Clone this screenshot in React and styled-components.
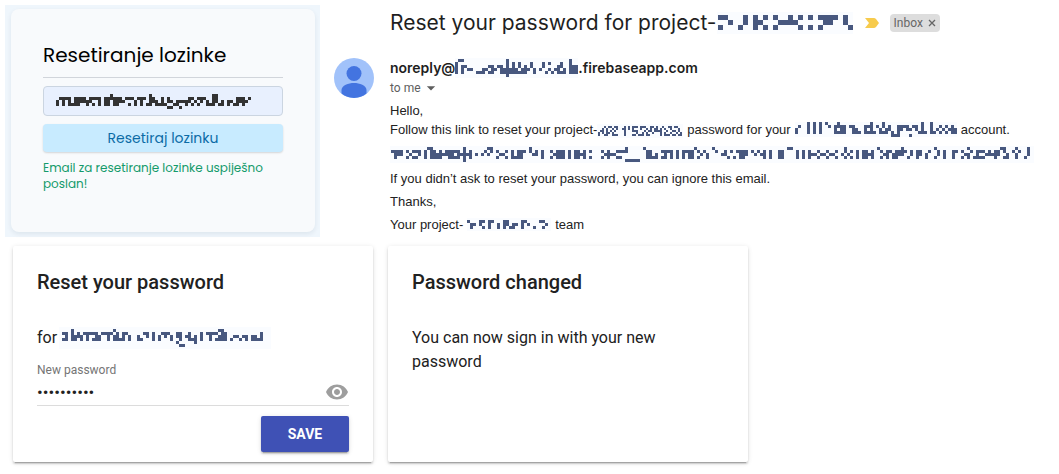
import React from "react";
import styled, { createGlobalStyle } from "styled-components";
import { MdVisibility, MdArrowDropDown } from "react-icons/md";

const GlobalStyle = createGlobalStyle`
  *, *::before, *::after { box-sizing: border-box; }
  body { margin: 0; background: #fff; }
  h1, h2, p { margin: 0; }
  button, input { font: inherit; }
`;

/* Censored values: each string is a row of blocks. */
const MASKS = {
  field: [
    "..................#............#....................##...........",
    ".####.####.####.######.###.###.##..#.#......##.###..##......###.#",
    "#.#.#.######..#.##.####...#.#..###.#.##.#####.#.#.#.##.#.##.####.",
    "#.#.####..#.#.#.##.##...#.#.#.##.####..##..#.#.#..###.##.#.##.#..",
    ".....................................##..#.......................",
  ],
  subject: [
    "##...#.#.#.#..#.#.#.####.#.",
    "..#..#.##...####.....##..#.",
    "#...#..#.#.#....#.#.#.....#",
  ],
  sender: [
    ".##..............#....................#..",
    "#................#.#.#...#...#.#...#..#..",
    "#.##.......##.##.#.#.#.#.#...#....##..###",
    "#.#.##...##.##.######.###.#.#..#.##.#.###",
    "#.#....###.##..#########..#...#.#.###.###",
    ".................#.......................",
  ],
  project: [
    "...#.##.##...#.#.###.###..##.#..#..##.##..",
    "..#.#..#.#..##.#.#...#..#.#.##.#.#..#...#.",
    ".##.#.#.#....#...###...#.##.####..#..##.#.",
    "#.#.##.#.....#.....#..#.#..#...#.#..#..#.#",
    "#..##..###...#...##.###.##.....#.###.##.##",
  ],
  account: [
    "....#.#.#.#...#..........#...#............#..#........",
    ".#..#.#.#..#.####.##...###.#.#.#..####.##.#..#..#.#.#.",
    "#...#.#.#....#.##..##..#.#..#.##..##.##.#.#..#.#.#.###",
    "#...#.#.#....####..###.####.###.#.#......###.##.#.#.##",
    "................................###...#...............",
  ],
  link: [
    "............##..........#.......##............#...............................#.....#................#.....#........................##.................#..........#.......#..........#..........#..........##...#...#.",
    "####.#.###.#.##.#.#####.#.#....#.#.#..#.#.###.#.#.#..#.###.#.##.#.#...#.#..####......##...####.#.####.#.#...#..#.#.####.#.#.#.#..##....#.#.#..#..#..#..#.#.#.##.#..#.##.####.#.##..#..#.#..##.#..#.###.#.##.#..#.#..#",
    ".###..#..#.#.########.#####.#.#.#...##..#.##...##.#...####.#.####......####..........##.#..#.#.#.#.##..#.#....##....###..#.##.#..##....#.#.###.##.##..#.#..#.####...##.####..#.##.#...#.#..#...##..#..#####..#..#...#",
    ".#...#.##..#.####..####.#.#........#..#.####......#..#.###.#.##.#.#...#.#..##........####.##.#.#.#.##.#..#......#.#.##......#.#..##....#.#.#..#..#..#..#.#.#.##.#..#.#.##...#..#..#..#..#..#..#.#.####...#..##..#..#",
    "........................#.....................................................#####..................................................................................................................................",
  ],
  team: [
    "#...##.##...##....##....##.",
    ".##.#..#..#.##.##.#.#.....#.",
    ".#...#.#..#.#.##..#...#..#..",
  ],
  recipient: [
    "...#.............#..................................##.............",
    "##.#.#.#####.####.#.##.....##.#..###..##..#...#.####.##...........#",
    ".#.####.#..##..#.##.#.#..#..#.#.#.#.#.##.##.#.#..#..###..##.##.##.#",
    "##.##.#.#.###..#.####.#..##...#.#...#..#..###.#..#.####.#..#.#.####",
    "......................................#.....#......................",
    ".......................................##..........................",
  ],
};

const Svg = styled.svg`
  display: block;
  flex: none;
`;

function Blocks({ name, size = 3, color = "#48587f" }) {
  const rows = MASKS[name];
  const cols = Math.max(...rows.map((r) => r.length));
  const d = rows
    .flatMap((row, y) =>
      [...row].map((c, x) => (c === "#" ? `M${x} ${y}h1v1h-1z` : ""))
    )
    .join("");
  return (
    <Svg
      width={cols * size}
      height={rows.length * size}
      viewBox={`0 0 ${cols} ${rows.length}`}
      shapeRendering="crispEdges"
      aria-hidden="true"
    >
      <path d={d} fill={color} />
    </Svg>
  );
}

const Page = styled.main`
  display: flex;
  flex-direction: column;
  gap: 9px;
  padding: 5px 5px 11px;
`;

const TopRow = styled.div`
  display: flex;
  align-items: flex-start;
  gap: 14px;
`;

const ResetPanel = styled.section`
  flex: 0 0 315px;
  padding: 4px 5px 5px 6px;
  background: #eff6fc;
  font-family: Poppins, Inter, sans-serif;
`;

const ResetForm = styled.form`
  display: flex;
  flex-direction: column;
  gap: 8px;
  padding: 32px 32px 40px;
  border-radius: 8px;
  background: #f8fafc;
  box-shadow: 0 2px 5px rgba(15, 40, 70, 0.08);
`;

const FormTitle = styled.h1`
  padding-bottom: 8px;
  border-bottom: 1px solid #d1d5db;
  color: #000;
  font-size: 20px;
  font-weight: 400;
  line-height: 28px;
`;

const MaskedField = styled.div`
  display: grid;
  align-items: center;
  & > * { grid-area: 1 / 1; }
  & > svg { margin-left: 13px; pointer-events: none; }
`;

const EmailInput = styled.input`
  width: 100%;
  height: 30px;
  padding: 0 12px;
  border: 1px solid #cbd5e1;
  border-radius: 4px;
  background: #e8f0fe;
`;

const ResetButton = styled.button`
  height: 28px;
  padding: 0;
  border: 0;
  border-radius: 4px;
  background: #c8ebff;
  box-shadow: 0 1px 2px rgba(0, 0, 0, 0.15);
  color: #0c6ba6;
  font-size: 14px;
`;

const Success = styled.p`
  color: #149a6b;
  font-size: 12px;
  line-height: 16px;
`;

const Mail = styled.article`
  flex: 1;
  min-width: 0;
  display: grid;
  grid-template-columns: 40px 1fr;
  column-gap: 16px;
  color: #1f1f1f;
`;

const MailHeader = styled.header`
  grid-column: 2;
  display: flex;
  align-items: center;
  height: 36px;
  margin-bottom: 17px;
`;

const Subject = styled.h1`
  display: flex;
  align-items: center;
  font: 400 21px/28px "Google Sans", Inter, sans-serif;
  white-space: nowrap;
`;

const Mask = styled.span`
  display: inline-flex;
  padding: ${(p) => p.$pad || "2px 1px"};
  background: #fafcff;
  vertical-align: middle;
`;

const Marker = styled.svg`
  flex: none;
  margin: 0 11px 0 12px;
`;

const Chip = styled.span`
  display: flex;
  align-items: center;
  gap: 5px;
  height: 18px;
  padding: 0 4px;
  border-radius: 4px;
  background: #ddd;
  color: #666;
  font: 12px/18px Roboto, sans-serif;
`;

const ChipClose = styled.button`
  display: flex;
  padding: 0;
  border: 0;
  background: none;
  color: inherit;
`;

const Avatar = styled.svg`
  display: block;
`;

const Sender = styled.div`
  display: flex;
  align-items: center;
  height: 20px;
  font: 600 14px/20px "Google Sans", Inter, sans-serif;
`;

const ToMe = styled.button`
  display: flex;
  align-items: center;
  height: 20px;
  padding: 0;
  border: 0;
  background: none;
  color: #5e5e5e;
  font: 12px/20px Roboto, sans-serif;
`;

const MailBody = styled.div`
  display: flex;
  flex-direction: column;
  gap: 4px;
  margin-top: 3px;
  color: #222;
  font: 13px/19px "Liberation Sans", Arial, sans-serif;
`;

const Line = styled.p`
  display: flex;
  align-items: center;
  height: 19px;
  gap: 4px;
  white-space: nowrap;
`;

const MaskedLink = styled.a`
  display: flex;
  align-items: center;
  height: 22px;
`;

const CardRow = styled.div`
  display: flex;
  gap: 15px;
  padding-left: 8px;
`;

const Card = styled.section`
  flex: 0 1 360px;
  padding: 24px 24px 10px;
  border-radius: 2px;
  background: #fff;
  box-shadow: 0 2px 2px rgba(0, 0, 0, 0.14), 0 3px 1px -2px rgba(0, 0, 0, 0.2),
    0 1px 5px rgba(0, 0, 0, 0.12);
  color: #212121;
  font: 16px/24px Roboto, sans-serif;
`;

const CardTitle = styled.h2`
  margin-bottom: 32px;
  font-size: 20px;
  font-weight: 500;
  line-height: 24px;
`;

const Recipient = styled.p`
  display: flex;
  align-items: center;
  gap: 2px;
  height: 24px;
`;

const PasswordLabel = styled.label`
  display: block;
  margin-top: 12px;
  color: #757575;
  font-size: 12px;
  line-height: 16px;
`;

const PasswordRow = styled.div`
  display: flex;
  align-items: center;
  height: 28px;
  border-bottom: 1px solid #dcdcdc;
`;

const PasswordInput = styled.input`
  flex: 1;
  min-width: 0;
  padding: 0;
  border: 0;
  outline: 0;
  color: #212121;
  font-size: 17px;
`;

const EyeButton = styled.button`
  display: flex;
  padding: 0;
  border: 0;
  background: none;
  color: #9e9e9e;
`;

const SaveButton = styled.button`
  display: block;
  width: 88px;
  height: 36px;
  margin: 10px 0 0 auto;
  border: 0;
  border-radius: 2px;
  background: #3f51b5;
  box-shadow: 0 2px 2px rgba(0, 0, 0, 0.14), 0 3px 1px -2px rgba(0, 0, 0, 0.2),
    0 1px 5px rgba(0, 0, 0, 0.12);
  color: #fff;
  font-size: 14px;
  font-weight: 700;
`;

export default function App() {
  return (
    <>
      <GlobalStyle />
      <Page>
        <TopRow>
          <ResetPanel>
            <ResetForm onSubmit={(e) => e.preventDefault()}>
              <FormTitle>Resetiranje lozinke</FormTitle>
              <MaskedField>
                <EmailInput type="email" aria-label="Email" />
                <Blocks name="field" color="#333" />
              </MaskedField>
              <ResetButton type="submit">Resetiraj lozinku</ResetButton>
              <Success>Email za resetiranje lozinke uspiješno poslan!</Success>
            </ResetForm>
          </ResetPanel>

          <Mail>
            <MailHeader>
              <Subject>
                Reset your password for project-
                <Mask $pad="3px 0 4px 1px">
                  <Blocks name="subject" size={5} />
                </Mask>
              </Subject>
              <Marker width="14" height="10" viewBox="0 0 14 10" aria-hidden="true">
                <path d="M0 0h9q1 0 2 1l3 4-3 4q-1 1-2 1H0l4-5z" fill="#f7cb4d" />
              </Marker>
              <Chip>
                Inbox
                <ChipClose aria-label="Remove label Inbox">
                  <svg width="8" height="8" viewBox="0 0 8 8" aria-hidden="true">
                    <path d="M1 1l6 6M7 1L1 7" stroke="currentColor" strokeWidth="1.3" />
                  </svg>
                </ChipClose>
              </Chip>
            </MailHeader>
            <Avatar width="40" height="40" viewBox="0 0 40 40" aria-hidden="true">
              <circle cx="20" cy="20" r="20" fill="#a1c2fa" />
              <circle cx="20" cy="15.5" r="7.5" fill="#4374e0" />
              <path
                d="M7.5 35.6V32c0-4.500 7-7 12.500-7s12.500 2.500 12.500 7v3.600A20 20 0 0 1 7.500 35.600z"
                fill="#4374e0"
              />
            </Avatar>
            <div>
              <Sender>
                noreply@
                <Mask $pad="1px 0">
                  <Blocks name="sender" />
                </Mask>
                .firebaseapp.com
              </Sender>
              <ToMe>
                to me
                <MdArrowDropDown size={20} />
              </ToMe>
              <MailBody>
                <div>
                  <Line>Hello,</Line>
                  <Line>
                    <span>
                      Follow this link to reset your project-
                      <Mask>
                        <Blocks name="project" size={2} />
                      </Mask>
                    </span>
                    <span>password for your</span>
                    <Mask $pad="0">
                      <Blocks name="account" />
                    </Mask>
                    <span>account.</span>
                  </Line>
                </div>
                <MaskedLink href="#reset" aria-label="Reset link">
                  <Mask $pad="1px">
                    <Blocks name="link" />
                  </Mask>
                </MaskedLink>
                <Line>
                  If you didn’t ask to reset your password, you can ignore this email.
                </Line>
                <Line>Thanks,</Line>
                <Line>
                  Your project-
                  <Mask $pad="2px 0">
                    <Blocks name="team" />
                  </Mask>
                  team
                </Line>
              </MailBody>
            </div>
          </Mail>
        </TopRow>

        <CardRow>
          <Card as="form" onSubmit={(e) => e.preventDefault()}>
            <CardTitle>Reset your password</CardTitle>
            <Recipient>
              for
              <Mask $pad="2px 8px 2px 3px">
                <Blocks name="recipient" />
              </Mask>
            </Recipient>
            <PasswordLabel htmlFor="new-password">New password</PasswordLabel>
            <PasswordRow>
              <PasswordInput
                id="new-password"
                type="password"
                defaultValue="password12"
              />
              <EyeButton type="button" aria-label="Show password">
                <MdVisibility size={24} />
              </EyeButton>
            </PasswordRow>
            <SaveButton type="submit">SAVE</SaveButton>
          </Card>
          <Card>
            <CardTitle>Password changed</CardTitle>
            <p>You can now sign in with your new password</p>
          </Card>
        </CardRow>
      </Page>
    </>
  );
}
